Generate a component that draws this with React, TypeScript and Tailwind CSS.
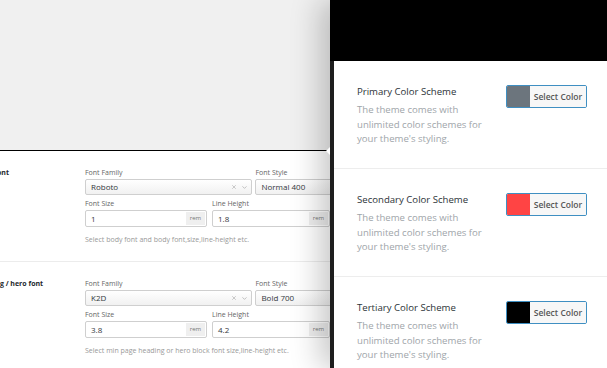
import { X, ChevronDown } from 'lucide-react'

interface FontRowProps {
    label: string
    family: string
    style: string
    size: string
    lineHeight: string
    help: string
}

function RemInput({ value, className }: { value: string; className: string }) {
    return (
        <div className={`flex h-[17px] items-stretch rounded-[2px] border border-[#cfcfcf] bg-white ${className}`}>
            <span className="flex-1 pl-[5px] text-[8px] leading-[15px] text-[#32373c]">{value}</span>
            <span className="my-[1px] mr-[1px] w-[19px] bg-[#efefef] text-center text-[6px] leading-[13px] text-[#777]">rem</span>
        </div>
    )
}

function FontRow({ label, family, style, size, lineHeight, help }: FontRowProps) {
    return (
        <div className="flex h-[111px] shrink-0 border-b border-[#ececec] pt-[17px]">
            <div className="ml-[-25px] w-[110px] shrink-0 text-[7px] font-bold leading-[10px] text-[#23282d]">{label}</div>
            <div className="flex w-[260px] shrink-0 flex-col">
                <div className="flex gap-[3px]">
                    <div className="flex w-[187px] flex-col gap-[1px]">
                        <span className="text-[7px] leading-[10px] text-[#666]">Font Family</span>
                        <div className="flex h-[16px] items-center rounded-[2px] border border-[#cfcfcf] bg-gradient-to-b from-white to-[#f1f1f1] pl-[5px] pr-[3px]">
                            <span className="flex-1 text-[8px] text-[#32373c]">{family}</span>
                            <X className="h-[6px] w-[6px] text-[#999]" strokeWidth={2} />
                            <ChevronDown className="ml-[4px] h-[7px] w-[7px] text-[#999]" strokeWidth={2} />
                        </div>
                    </div>
                    <div className="flex w-[100px] flex-col gap-[1px]">
                        <span className="text-[7px] leading-[10px] text-[#666]">Font Style</span>
                        <div className="flex h-[16px] items-center rounded-[2px] border border-[#cfcfcf] bg-gradient-to-b from-white to-[#f1f1f1] pl-[5px]">
                            <span className="text-[8px] text-[#32373c]">{style}</span>
                        </div>
                    </div>
                </div>
                <div className="mt-[4px] flex gap-[5px]">
                    <div className="flex flex-col gap-[1px]">
                        <span className="text-[7px] leading-[10px] text-[#666]">Font Size</span>
                        <RemInput value={size} className="w-[122px]" />
                    </div>
                    <div className="flex flex-col gap-[1px]">
                        <span className="text-[7px] leading-[10px] text-[#666]">Line Height</span>
                        <RemInput value={lineHeight} className="w-[118px]" />
                    </div>
                </div>
                <p className="mt-[8px] whitespace-nowrap text-[7px] leading-[10px] text-[#999]">{help}</p>
            </div>
        </div>
    )
}

const schemes = [
    { title: 'Primary Color Scheme', color: 'bg-[#6c757d]' },
    { title: 'Secondary Color Scheme', color: 'bg-[#ff4444]' },
    { title: 'Tertiary Color Scheme', color: 'bg-black' },
]

export default function App() {
    return (
        <div className="flex h-[368px] w-[607px] overflow-hidden bg-white font-['Open_Sans',sans-serif]">
            {/* Settings page behind the drawer */}
            <div className="flex w-[330px] shrink-0 flex-col overflow-hidden">
                <div className="h-[151px] shrink-0 border-b border-black bg-[#f0f0f0]" />
                <FontRow
                    label="Body font"
                    family="Roboto"
                    style="Normal 400"
                    size="1"
                    lineHeight="1.8"
                    help="Select body font and body font,size,line-height etc."
                />
                <FontRow
                    label="Heading / hero font"
                    family="K2D"
                    style="Bold 700"
                    size="3.8"
                    lineHeight="4.2"
                    help="Select min page heading or hero block font size,line-height etc."
                />
            </div>

            {/* Color scheme drawer */}
            <aside className="relative z-10 flex flex-1 flex-col bg-black shadow-[-10px_0_28px_rgba(0,0,0,0.22)]">
                <span className="absolute left-[-4px] top-[147px] h-0 w-0 border-y-[4px] border-r-[4px] border-y-transparent border-r-white" />
                <div className="h-[61px] shrink-0 bg-black" />
                <div className="flex-1 border-l-4 border-[#1e1e1e] bg-white">
                    {schemes.map((s) => (
                        <div key={s.title} className="flex h-[108px] items-start justify-between border-b border-[#ededed] pl-[23px] pr-[20px]">
                            <div className="w-[135px] pt-[23px]">
                                <h3 className="text-[9.6px] leading-[15px] text-[#2c3338]">{s.title}</h3>
                                <p className="mt-[4px] text-[9.6px] leading-[14.5px] text-[#a0a5aa]">
                                    The theme comes with unlimited color schemes for your theme's styling.
                                </p>
                            </div>
                            <button className="mt-[24px] flex h-[23px] w-[81px] overflow-hidden rounded-[2px] border border-[#3f8fc2]">
                                <span className={`w-[23px] ${s.color}`} />
                                <span className="flex-1 bg-[#f7f7f7] text-[8.5px] font-semibold leading-[21px] text-[#555]">Select Color</span>
                            </button>
                        </div>
                    ))}
                </div>
            </aside>
        </div>
    )
}
